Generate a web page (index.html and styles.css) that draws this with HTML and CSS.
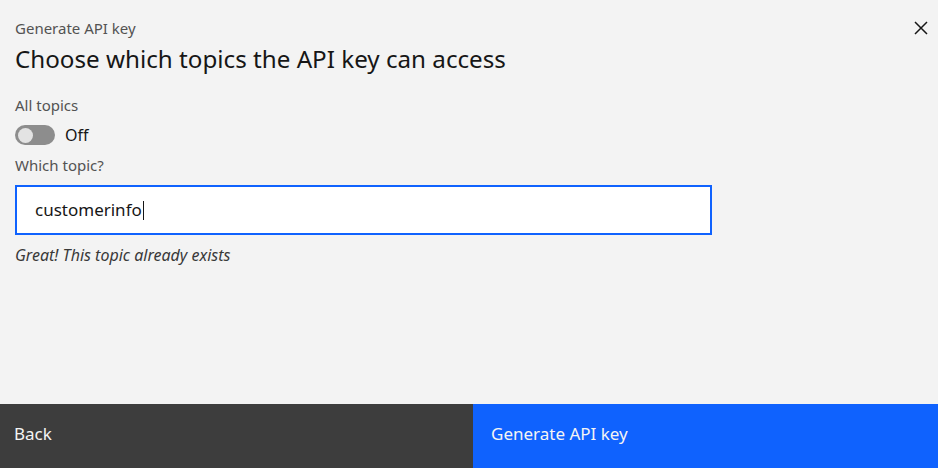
FILE: index.html
```html
<!DOCTYPE html>
<html lang="en">
<head>
<meta charset="utf-8">
<title>Generate API key</title>
<link rel="stylesheet" href="styles.css">
</head>
<body>
<div class="modal">
  <header class="modal-header">
    <div class="heading">
      <p class="modal-label">Generate API key</p>
      <h2 class="modal-title">Choose which topics the API key can access</h2>
    </div>
    <button class="close-btn" aria-label="Close">
      <svg width="16" height="16" viewBox="0 0 16 16" aria-hidden="true">
        <path d="M2 2 L14 14 M14 2 L2 14" stroke="#161616" stroke-width="1.5" fill="none"/>
      </svg>
    </button>
  </header>
  <main class="modal-body">
    <div class="field">
      <span class="field-label">All topics</span>
      <div class="toggle-row">
        <span class="toggle"><span class="toggle-knob"></span></span>
        <span class="toggle-text">Off</span>
      </div>
    </div>
    <div class="field">
      <span class="field-label">Which topic?</span>
      <div class="text-input"><span class="input-value">customerinfo</span><span class="caret"></span></div>
      <span class="helper">Great! This topic already exists</span>
    </div>
  </main>
  <footer class="modal-footer">
    <button class="btn btn-secondary">Back</button>
    <button class="btn btn-primary">Generate API key</button>
  </footer>
</div>
</body>
</html>
```

FILE: styles.css
```css
* { box-sizing: border-box; }
html, body { margin: 0; padding: 0; height: 100%; }
body {
  background: #f3f3f3;
  font-family: "Noto Sans", "Open Sans", sans-serif;
  color: #161616;
}
.modal {
  height: 468px;
  display: flex;
  flex-direction: column;
  background: #f3f3f3;
}
.modal-header {
  display: flex;
  justify-content: space-between;
  align-items: flex-start;
  padding: 18px 9px 0 15px;
}
.modal-label {
  margin: 0;
  font-size: 15px;
  line-height: 20px;
  color: #525252;
}
.modal-title {
  margin: 6px 0 0;
  font-size: 24.2px;
  line-height: 30px;
  font-weight: 400;
  color: #161616;
}
.close-btn {
  background: none;
  border: 0;
  padding: 0;
  margin-top: 2px;
  width: 16px;
  height: 16px;
  display: flex;
  cursor: pointer;
}
.modal-body {
  flex: 1;
  padding: 21px 15px 0 15px;
  display: flex;
  flex-direction: column;
  gap: 10px;
}
.field {
  display: flex;
  flex-direction: column;
  gap: 10px;
  align-items: flex-start;
}
.field-label {
  font-size: 15px;
  line-height: 20px;
  color: #525252;
}
.toggle-row {
  display: flex;
  align-items: center;
  gap: 10px;
  height: 20px;
}
.toggle {
  width: 40px;
  height: 20px;
  border-radius: 10px;
  background: #8d8d8d;
  display: flex;
  align-items: center;
  padding-left: 3px;
}
.toggle-knob {
  width: 15px;
  height: 15px;
  border-radius: 50%;
  background: #e3e3e3;
}
.toggle-text {
  font-size: 16px;
  line-height: 20px;
  color: #161616;
}
.text-input {
  width: 697px;
  height: 50px;
  border: 2px solid #0f62fe;
  background: #ffffff;
  display: flex;
  align-items: center;
  padding-left: 18px;
}
.input-value {
  font-size: 17px;
  line-height: 22px;
  color: #161616;
}
.caret {
  width: 1px;
  height: 19px;
  background: #161616;
  margin-left: 1px;
}
.helper {
  font-size: 16px;
  line-height: 20px;
  font-style: italic;
  color: #393939;
}
.modal-footer {
  display: flex;
  height: 64px;
}
.btn {
  border: 0;
  margin: 0;
  height: 64px;
  display: flex;
  align-items: center;
  padding-bottom: 6px;
  font-family: inherit;
  font-size: 17px;
  color: #f4f4f4;
  cursor: pointer;
  text-align: left;
}
.btn-secondary {
  width: 473px;
  background: #3d3d3d;
  padding-left: 14px;
}
.btn-primary {
  flex: 1;
  background: #0f62fe;
  padding-left: 18px;
}
```
